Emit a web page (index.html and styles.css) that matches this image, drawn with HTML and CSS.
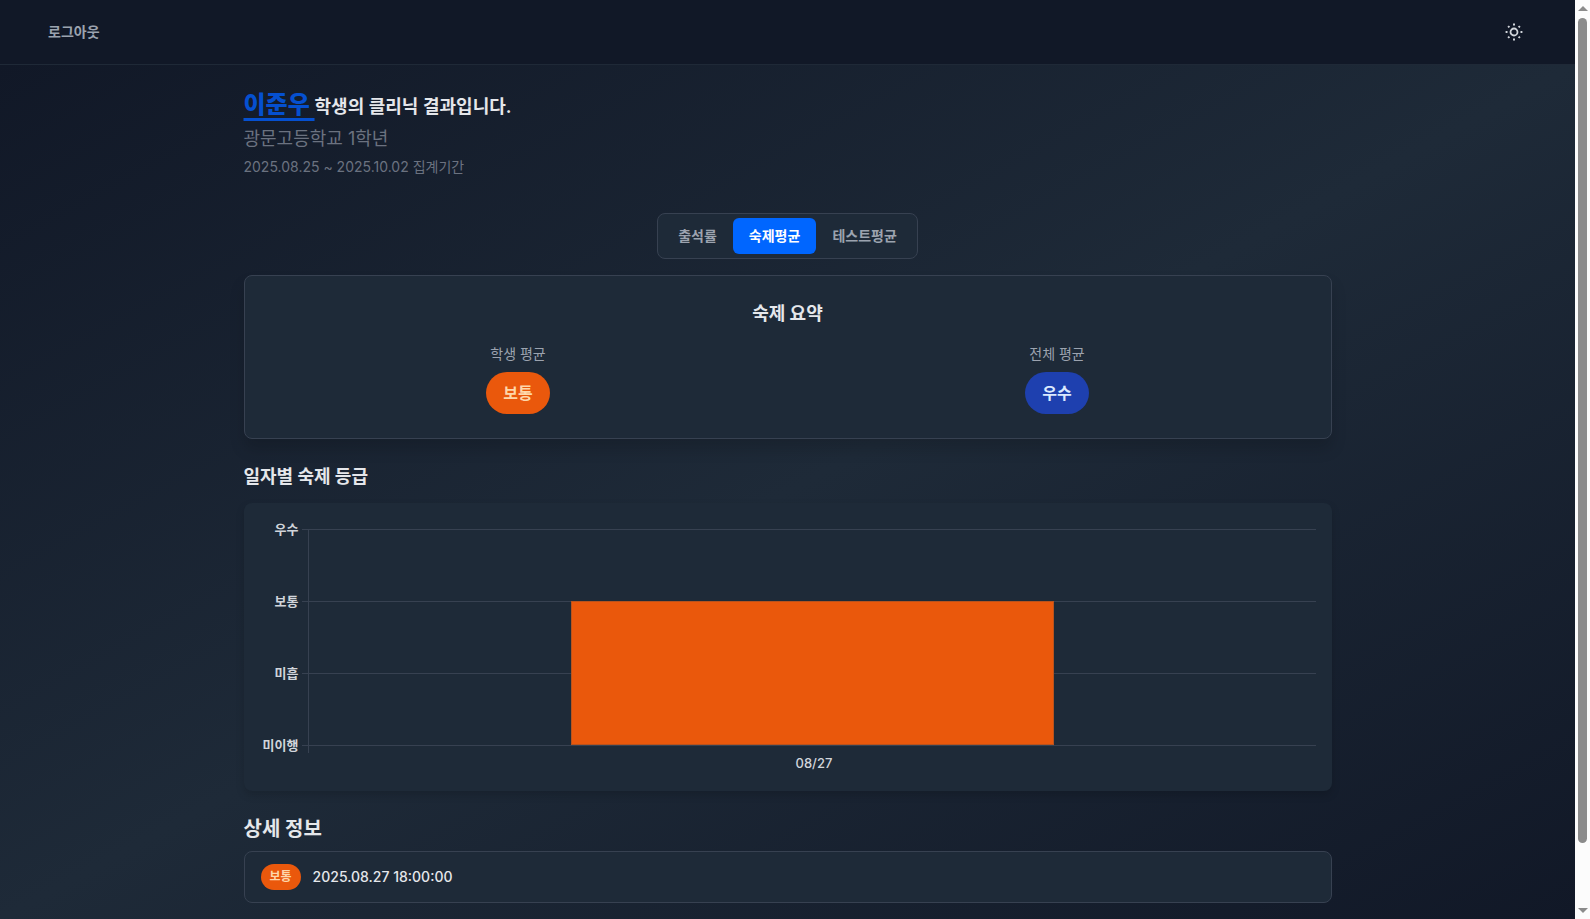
FILE: index.html
```html
<!DOCTYPE html>
<html lang="ko">
<head>
<meta charset="utf-8">
<meta name="viewport" content="width=device-width, initial-scale=1">
<title>클리닉 결과</title>
<link rel="stylesheet" href="styles.css">
</head>
<body>
<div class="page">

<header class="header">
  <button type="button" class="logout">로그아웃</button>
  <button type="button" class="theme_btn" aria-label="테마 변경">
    <svg width="20" height="20" viewBox="0 0 20 20" fill="none" stroke="currentColor">
      <circle cx="10" cy="10" r="3.5" stroke-width="1.8"/>
      <path stroke-width="2" d="M10 1.6v1.9M10 16.5v1.9M1.6 10h1.9M16.5 10h1.9M4.1 4.1l1.3 1.3M14.6 14.6l1.3 1.3M4.1 15.9l1.3-1.3M14.6 5.4l1.3-1.3"/>
    </svg>
  </button>
</header>

<main class="content">
  <div class="container">
    <section class="student">
      <h1 class="student_title"><span class="student_name">이준우 </span>학생의 클리닉 결과입니다.</h1>
      <p class="student_school">광문고등학교 1학년</p>
      <p class="student_period">2025.08.25 ~ 2025.10.02 집계기간</p>
    </section>

    <nav class="tabs">
      <button type="button" class="tab">출석률</button>
      <button type="button" class="tab active">숙제평균</button>
      <button type="button" class="tab">테스트평균</button>
    </nav>

    <section class="summary">
      <h2 class="summary_title">숙제 요약</h2>
      <div class="summary_grid">
        <div class="summary_item">
          <p class="summary_label">학생 평균</p>
          <span class="badge normal">보통</span>
        </div>
        <div class="summary_item">
          <p class="summary_label">전체 평균</p>
          <span class="badge good">우수</span>
        </div>
      </div>
    </section>

    <h2 class="chart_title">일자별 숙제 등급</h2>
    <section class="chart">
      <div class="y_axis">
        <span>우수</span>
        <span>보통</span>
        <span>미흡</span>
        <span>미이행</span>
      </div>
      <div class="ticks"><i></i><i></i><i></i></div>
      <div class="plot">
        <div class="rows"><i></i><i></i><i></i></div>
        <div class="bar"></div>
      </div>
      <div class="x_axis">08/27</div>
    </section>

    <h2 class="detail_title">상세 정보</h2>
    <ul class="detail_list">
      <li class="detail_item">
        <span class="badge normal small">보통</span>
        <span class="detail_date">2025.08.27 18:00:00</span>
      </li>
    </ul>
  </div>
</main>

</div><!--page end-->

<div class="scrollbar" aria-hidden="true">
  <span class="arrow up"></span>
  <span class="thumb"></span>
  <span class="arrow down"></span>
</div>
</body>
</html>
```
FILE: styles.css
```css
*{
	box-sizing:border-box;
	margin:0;
	padding:0;
}
body{
	display:flex;
	height:100vh;
	overflow:hidden;
	background-color:#111827;
	color:#e5e7eb;
	font-family:Inter, "Noto Sans CJK KR", sans-serif;
	font-size:14px;
	line-height:20px;
}
button{
	border:0;
	background:none;
	color:inherit;
	font:inherit;
	cursor:pointer;
}
.page{
	display:flex;
	flex:1;
	flex-direction:column;
	min-width:0;
}

/* header */
.header{
	display:flex;
	flex:none;
	align-items:center;
	justify-content:space-between;
	height:65px;
	padding:0 48px;
	border-bottom:1px solid #1f2937;
	background-color:#111827;
}
.logout{
	color:#9ca3af;
	font-weight:600;
}
.theme_btn{
	display:flex;
	padding:3px;
	color:#d1d5db;
}

/* content */
.content{
	flex:1;
	padding:24px 24px 16px;
	background:linear-gradient(to bottom right, #111827, #1e2a38, #111827);
}
.container{
	max-width:1088px;
	margin:0 auto;
}
.student_title{
	margin-bottom:1px;
	color:#e5e7eb;
	font-size:18px;
	font-weight:600;
	line-height:34px;
}
.student_name{
	color:#0550d0;
	font-size:24px;
	font-weight:900;
	line-height:32px;
	text-decoration:underline 3px;
	text-decoration-skip-ink:none;
	text-underline-offset:5px;
	white-space:pre-wrap;
}
.student_school{
	color:#6b7280;
	font-size:18px;
	line-height:28px;
}
.student_period{
	margin-top:4px;
	color:#6b7280;
}
.tabs{
	display:flex;
	width:fit-content;
	margin:36px auto 16px;
	padding:4px;
	border:1px solid #374151;
	border-radius:8px;
	background-color:#1e2a38;
}
.tab{
	padding:8px 16px;
	border-radius:6px;
	color:#9ca3af;
	font-weight:600;
}
.tab.active{
	background-color:#0066ff;
	color:#fff;
}

/* summary card */
.summary{
	padding:24px;
	border:1px solid #374151;
	border-radius:8px;
	background-color:#1e2a38;
	box-shadow:0 10px 15px rgba(0,0,0,.15);
	text-align:center;
}
.summary_title{
	margin-bottom:16px;
	font-size:18px;
	line-height:28px;
}
.summary_grid{
	display:grid;
	grid-template-columns:1fr 1fr;
	column-gap:40px;
}
.summary_label{
	margin-bottom:8px;
	color:#9ca3af;
}
.badge{
	display:inline-block;
	padding:8px 17px;
	border-radius:21px;
	font-size:16px;
	font-weight:600;
	line-height:26px;
	vertical-align:top;
}
.badge.normal{
	background-color:#ea580c;
	color:#fed7aa;
}
.badge.good{
	background-color:#1e40af;
	color:#dbeafe;
}
.badge.small{
	padding:4px 9px;
	font-size:12px;
	line-height:18px;
}

/* chart */
.chart_title{
	margin:24px 0 12px;
	font-size:18px;
	line-height:28px;
}
.chart{
	display:grid;
	grid-template-columns:auto 6px 1fr;
	grid-template-rows:216px auto;
	column-gap:4px;
	padding:26px 16px 18px;
	border-radius:8px;
	background-color:#1e2a38;
	box-shadow:0 4px 8px rgba(0,0,0,.15);
}
.y_axis{
	display:flex;
	flex-direction:column;
	justify-content:space-between;
	margin:-10px 0;
	padding-left:3px;
	color:#d1d5db;
	font-size:13px;
	font-weight:600;
	text-align:right;
}
.ticks,.rows{
	display:flex;
	flex-direction:column;
	height:217px;
	border-bottom:1px solid #374151;
}
.ticks i,.rows i{
	flex:1;
	border-top:1px solid #374151;
}
.plot{
	display:grid;
	height:224px;
	margin-left:-4px;
	border-left:1px solid #374151;
}
.rows,.bar{
	grid-area:1 / 1;
}
.bar{
	justify-self:center;
	width:48%;
	height:144px;
	margin-top:72px;
	border:1px solid #b9531d;
	background-color:#ea580c;
}
.x_axis{
	grid-column:3;
	padding-top:8px;
	color:#d1d5db;
	font-size:13px;
	font-weight:500;
	text-align:center;
}

/* detail */
.detail_title{
	margin:24px 0 8px;
	font-size:20px;
	line-height:28px;
}
.detail_list{
	list-style:none;
}
.detail_item{
	display:flex;
	align-items:center;
	gap:12px;
	padding:12px 16px;
	border:1px solid #374151;
	border-radius:8px;
	background-color:#1e2a38;
}
.detail_date{
	font-weight:500;
}

/* scrollbar */
.scrollbar{
	display:flex;
	flex-direction:column;
	align-items:center;
	width:15px;
	padding:6px 0;
	background-color:#fcfcfc;
}
.arrow{
	border:5px solid transparent;
}
.arrow.up{
	border-top:0;
	border-bottom-color:#8b8b8b;
}
.arrow.down{
	margin-top:auto;
	border-bottom:0;
	border-top-color:#8b8b8b;
}
.thumb{
	width:9px;
	height:91%;
	margin-top:7px;
	border-radius:5px;
	background-color:#8b8b8b;
}
```
